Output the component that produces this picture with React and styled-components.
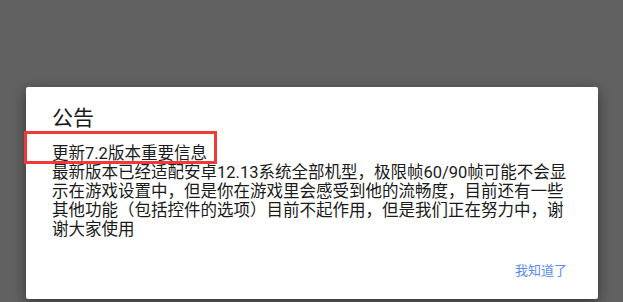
import React from 'react';
import styled, { createGlobalStyle } from 'styled-components';

const GlobalStyle = createGlobalStyle`
  html, body {
    margin: 0;
    padding: 0;
    background: #616161;
  }
  body {
    font-family: "Roboto", "Noto Sans CJK SC", sans-serif;
  }
`;

const Screen = styled.div`
  width: 623px;
  height: 302px;
  box-sizing: border-box;
  padding: 87px 0 0 26px;
  background: #616161;
  overflow: hidden;
`;

const Dialog = styled.div`
  position: relative;
  width: 572px;
  box-sizing: border-box;
  padding: 19px 26px 18px 26px;
  background: #ffffff;
  border-radius: 2px;
  box-shadow: 0 4px 14px rgba(0, 0, 0, 0.45);
  display: flex;
  flex-direction: column;
`;

const Title = styled.div`
  font-size: 21px;
  line-height: 24px;
  color: #1a1a1a;
  margin-bottom: 14px;
`;

const Message = styled.div`
  font-size: 16.5px;
  line-height: 19px;
  color: #1a1a1a;
`;

const Actions = styled.div`
  display: flex;
  justify-content: flex-end;
  margin-top: 22px;
`;

const TextButton = styled.button`
  border: none;
  background: none;
  padding: 0;
  margin-right: 5px;
  font-family: inherit;
  font-size: 13px;
  line-height: 20px;
  color: #5b8cf2;
  cursor: pointer;
`;

// red annotation frame drawn over the headline
const Highlight = styled.div`
  position: absolute;
  left: -2px;
  top: 44px;
  width: 193px;
  height: 33px;
  box-sizing: border-box;
  border: 3px solid #f03a3a;
  pointer-events: none;
`;

export default function App() {
  return (
    <>
      <GlobalStyle />
      <Screen>
        <Dialog>
          <Title>公告</Title>
          <Message>
            更新7.2版本重要信息
            <br />
            最新版本已经适配安卓12.13系统全部机型，极限帧60/90帧可能不会显示在游戏设置中，但是你在游戏里会感受到他的流畅度，目前还有一些其他功能（包括控件的选项）目前不起作用，但是我们正在努力中，谢谢大家使用
          </Message>
          <Actions>
            <TextButton>我知道了</TextButton>
          </Actions>
          <Highlight />
        </Dialog>
      </Screen>
    </>
  );
}
